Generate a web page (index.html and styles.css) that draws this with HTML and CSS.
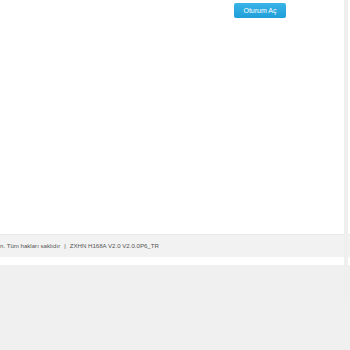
FILE: index.html
```html
<!DOCTYPE html>
<html lang="tr">
<head>
    <meta charset="UTF-8">
    <title>ZXHN H168A</title>
    <link rel="stylesheet" href="styles.css">
</head>
<body>
    <div class="page">
        <div class="main">
            <div class="topbar">
                <button class="login-btn">Oturum Aç</button>
            </div>
        </div>
        <div class="footer">
            <span>n. Tüm hakları saklıdır</span><span class="sep">|</span><span>ZXHN H168A V2.0 V2.0.0P6_TR</span>
        </div>
        <div class="gap"></div>
        <div class="bottom"></div>
        <div class="scroll-shadow"></div>
    </div>
</body>
</html>
```

FILE: styles.css
```css
html, body { margin: 0; padding: 0; }
body { font-family: "Liberation Sans", Arial, sans-serif; background: #f0f0f0; width: 350px; height: 350px; overflow: hidden; }
.page { position: relative; height: 350px; }
.main { height: 234px; background: #fff; }
.topbar { display: flex; padding: 3px 0 0 234px; }
.login-btn { width: 52px; height: 15px; padding: 0; border: 0; border-radius: 2px; background: linear-gradient(#3ab3e8, #1f9fd9); color: #fff; font-family: inherit; font-size: 7px; line-height: 15px; }
.footer { height: 22px; border-top: 1px solid #e8e8e8; background: #f2f2f2; color: #555; font-size: 6.1px; line-height: 22px; white-space: nowrap; }
.sep { margin: 0 4px; }
.gap { height: 8px; background: #fff; }
.bottom { height: 85px; background: #f0f0f0; }
.scroll-shadow { position: absolute; top: 0; left: 344px; width: 4px; height: 301px; background: #efefef; }
```
